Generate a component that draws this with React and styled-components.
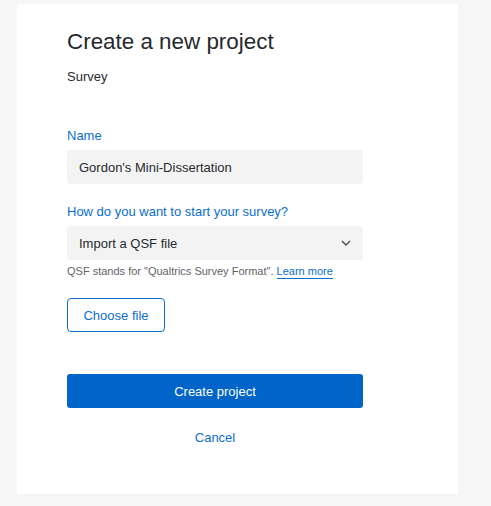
import styled, { createGlobalStyle } from 'styled-components'

const BLUE = '#0b6ed0'

const GlobalStyle = createGlobalStyle`
    html, body {
        margin: 0;
        padding: 0;
        background-color: #f6f6f6;
        font-family: "Liberation Sans", Arial, sans-serif;
        color: #272a2e;
    }
`

const Page = styled.div`
    width: 491px;
    height: 506px;
    padding: 4px 0 0 17px;
    box-sizing: border-box;
`

const Card = styled.div`
    display: flex;
    flex-direction: column;
    width: 441px;
    height: 490px;
    padding: 25px 0 0 50px;
    box-sizing: border-box;
    background-color: #FFFFFF;
`

const Title = styled.h1`
    margin: 0;
    font-size: 22.4px;
    font-weight: 400;
    line-height: 26px;
    color: #26292d;
`

const Subtitle = styled.div`
    margin-top: 14px;
    font-size: 13px;
    line-height: 16px;
`

const Field = styled.div`
    display: flex;
    flex-direction: column;
    width: 296px;
    margin-top: ${(props) => props.top}px;
`

const Label = styled.label`
    font-size: 13px;
    line-height: 16px;
    color: ${BLUE};
    margin-bottom: 6px;
`

const Input = styled.div`
    display: flex;
    align-items: center;
    justify-content: space-between;
    height: 34px;
    padding: 0 12px;
    box-sizing: border-box;
    border-radius: 4px;
    background-color: #f3f3f3;
    font-size: 13px;
`

const Help = styled.div`
    margin-top: 4px;
    font-size: 11px;
    line-height: 14px;
    color: #5f6368;

    a {
        color: ${BLUE};
        text-decoration: none;
        border-bottom: 1px solid ${BLUE};
        padding-bottom: 1px;
    }
`

const OutlineButton = styled.button`
    align-self: flex-start;
    width: 98px;
    height: 34px;
    margin-top: 20px;
    border: 1px solid ${BLUE};
    border-radius: 4px;
    background-color: #FFFFFF;
    color: ${BLUE};
    font-family: inherit;
    font-size: 13px;
`

const PrimaryButton = styled.button`
    width: 296px;
    height: 34px;
    margin-top: 42px;
    border: none;
    border-radius: 3px;
    background-color: #0064c8;
    color: #FFFFFF;
    font-family: inherit;
    font-size: 13px;
`

const TextButton = styled.button`
    width: 296px;
    margin-top: 21px;
    border: none;
    background: none;
    color: ${BLUE};
    font-family: inherit;
    font-size: 13px;
    line-height: 16px;
`

function Chevron() {
    return (
        <svg width="10" height="6" viewBox="0 0 10 6">
            <path d="M1 1 L5 5 L9 1" fill="none" stroke="#4a4d52" strokeWidth="1.4" />
        </svg>
    )
}

export default function App() {
    return (
        <Page>
            <GlobalStyle />
            <Card>
                <Title>Create a new project</Title>
                <Subtitle>Survey</Subtitle>
                <Field top={43}>
                    <Label>Name</Label>
                    <Input>Gordon's Mini-Dissertation</Input>
                </Field>
                <Field top={20}>
                    <Label>How do you want to start your survey?</Label>
                    <Input>
                        Import a QSF file
                        <Chevron />
                    </Input>
                    <Help>
                        QSF stands for "Qualtrics Survey Format". <a href="#">Learn more</a>
                    </Help>
                </Field>
                <OutlineButton>Choose file</OutlineButton>
                <PrimaryButton>Create project</PrimaryButton>
                <TextButton>Cancel</TextButton>
            </Card>
        </Page>
    )
}
